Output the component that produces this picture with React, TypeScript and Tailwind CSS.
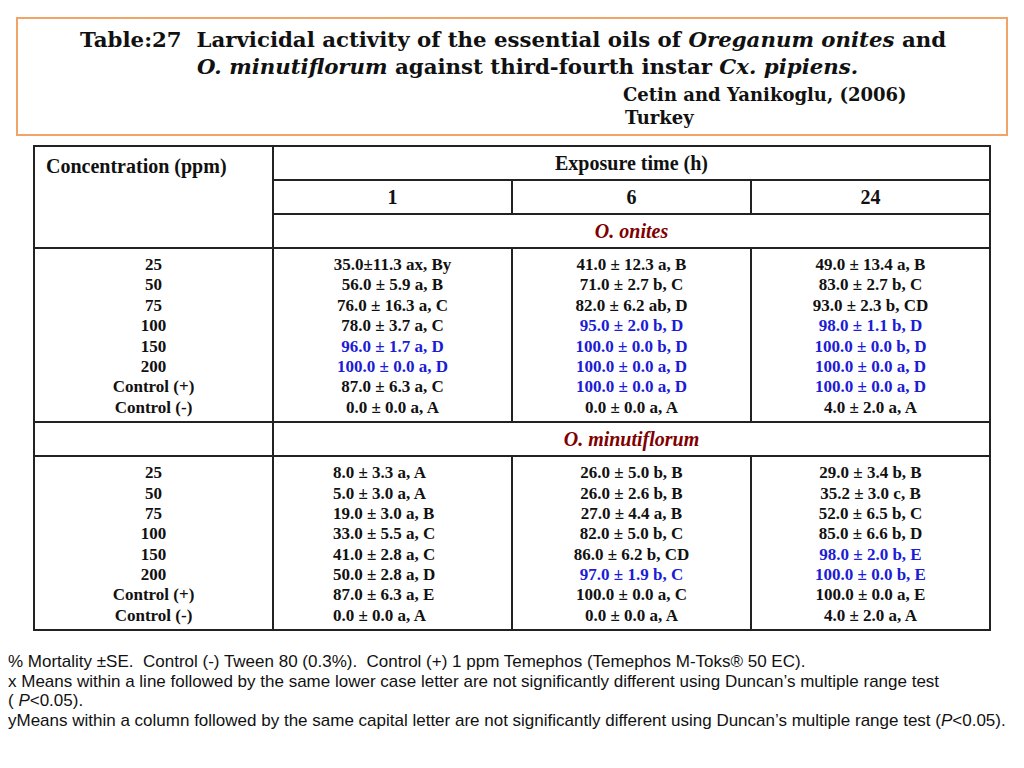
import React from 'react';

type Cell = { t: string; blue?: boolean };

const conc = ['25', '50', '75', '100', '150', '200', 'Control (+)', 'Control (-)'];

const b = (t: string): Cell => ({ t, blue: true });
const k = (t: string): Cell => ({ t });

const onites: Cell[][] = [
  [k('35.0±11.3 ax, By'), k('56.0 ± 5.9 a, B'), k('76.0 ± 16.3 a, C'), k('78.0 ± 3.7 a, C'), b('96.0 ± 1.7 a, D'), b('100.0 ± 0.0 a, D'), k('87.0 ± 6.3 a, C'), k('0.0 ± 0.0 a, A')],
  [k('41.0 ± 12.3 a, B'), k('71.0 ± 2.7 b, C'), k('82.0 ± 6.2 ab, D'), b('95.0 ± 2.0 b, D'), b('100.0 ± 0.0 b, D'), b('100.0 ± 0.0 a, D'), b('100.0 ± 0.0 a, D'), k('0.0 ± 0.0 a, A')],
  [k('49.0 ± 13.4 a, B'), k('83.0 ± 2.7 b, C'), k('93.0 ± 2.3 b, CD'), b('98.0 ± 1.1 b, D'), b('100.0 ± 0.0 b, D'), b('100.0 ± 0.0 a, D'), b('100.0 ± 0.0 a, D'), k('4.0 ± 2.0 a, A')],
];

const minuti: Cell[][] = [
  [k('8.0 ± 3.3 a, A'), k('5.0 ± 3.0 a, A'), k('19.0 ± 3.0 a, B'), k('33.0 ± 5.5 a, C'), k('41.0 ± 2.8 a, C'), k('50.0 ± 2.8 a, D'), k('87.0 ± 6.3 a, E'), k('0.0 ± 0.0 a, A')],
  [k('26.0 ± 5.0 b, B'), k('26.0 ± 2.6 b, B'), k('27.0 ± 4.4 a, B'), k('82.0 ± 5.0 b, C'), k('86.0 ± 6.2 b, CD'), b('97.0 ± 1.9 b, C'), k('100.0 ± 0.0 a, C'), k('0.0 ± 0.0 a, A')],
  [k('29.0 ± 3.4 b, B'), k('35.2 ± 3.0 c, B'), k('52.0 ± 6.5 b, C'), k('85.0 ± 6.6 b, D'), b('98.0 ± 2.0 b, E'), b('100.0 ± 0.0 b, E'), k('100.0 ± 0.0 a, E'), k('4.0 ± 2.0 a, A')],
];

const border = 'border-2 border-[#222]';

const Lines = ({ items, alignLeft }: { items: Cell[]; alignLeft?: boolean }) => (
  <div className={alignLeft ? 'text-left pl-[59px]' : 'text-center'}>
    {items.map((c, i) => (
      <div key={i} className={`h-[20.4px] leading-[20.4px] ${c.blue ? 'text-[#1c1cd6]' : 'text-[#111]'}`}>
        {c.t}
      </div>
    ))}
  </div>
);

const DataRow = ({ cols, left }: { cols: Cell[][]; left?: boolean }) => (
  <tr>
    <td className={`${border} align-top pt-[6px] pb-[3px]`}>
      <Lines items={conc.map((t) => ({ t }))} />
    </td>
    {cols.map((c, i) => (
      <td key={i} className={`${border} align-top pt-[6px] pb-[3px]`}>
        <Lines items={c} alignLeft={left && i === 0} />
      </td>
    ))}
  </tr>
);

const App: React.FC = () => {
  return (
    <div className="w-[1024px] h-[768px] bg-white overflow-hidden">
      {/* Title box */}
      <div className="mx-[16px] mt-[17px] h-[119px] border-2 border-[#f0a465] pt-[7px] text-[#111] font-bold font-['DejaVu_Serif',serif]">
        <div className="text-[21.3px] leading-[27px]">
          <div className="pl-[62px] whitespace-pre">
            {'Table:27  Larvicidal activity of the essential oils of '}
            <i>Oreganum onites</i>
            {' and'}
          </div>
          <div className="pl-[179px]">
            <i>O. minutiflorum</i> against third-fourth instar <i>Cx. pipiens.</i>
          </div>
        </div>
        <div className="text-[18px] leading-[23px] pl-[605px] mt-[3px]">
          <div>Cetin and Yanikoglu, (2006)</div>
          <div className="pl-[2px]">Turkey</div>
        </div>
      </div>

      {/* Table */}
      <table className="ml-[33px] mt-[9px] w-[958px] border-collapse font-['Liberation_Serif',serif] font-bold text-[17px] text-[#111]">
        <colgroup>
          <col className="w-[239px]" />
          <col className="w-[239px]" />
          <col className="w-[239px]" />
          <col className="w-[239px]" />
        </colgroup>
        <tbody>
          <tr className="h-[34px]">
            <td rowSpan={3} className={`${border} align-top text-left pl-[11px] pt-[4px] text-[20px]`}>
              Concentration (ppm)
            </td>
            <td colSpan={3} className={`${border} text-center text-[20px]`}>
              Exposure time (h)
            </td>
          </tr>
          <tr className="h-[34px] text-[20px]">
            <td className={`${border} text-center`}>1</td>
            <td className={`${border} text-center`}>6</td>
            <td className={`${border} text-center`}>24</td>
          </tr>
          <tr className="h-[34px]">
            <td colSpan={3} className={`${border} text-center italic text-[#800000] text-[20px]`}>
              O. onites
            </td>
          </tr>
          <DataRow cols={onites} />
          <tr className="h-[34px]">
            <td className={border}></td>
            <td colSpan={3} className={`${border} text-center italic text-[#800000] text-[20px]`}>
              O. minutiflorum
            </td>
          </tr>
          <DataRow cols={minuti} left />
        </tbody>
      </table>

      {/* Footnotes */}
      <div className="mt-[21px] pl-[8px] font-['Liberation_Sans',sans-serif] text-[17px] leading-[19.5px] text-[#111]">
        <div className="whitespace-pre">% Mortality ±SE.  Control (-) Tween 80 (0.3%).  Control (+) 1 ppm Temephos (Temephos M-Toks® 50 EC).</div>
        <div>x Means within a line followed by the same lower case letter are not significantly different using Duncan’s multiple range test</div>
        <div>
          ( <i>P</i>&lt;0.05).
        </div>
        <div className="whitespace-nowrap">
          yMeans within a column followed by the same capital letter are not significantly different using Duncan’s multiple range test (<i>P</i>&lt;0.05).
        </div>
      </div>
    </div>
  );
};

export default App;
